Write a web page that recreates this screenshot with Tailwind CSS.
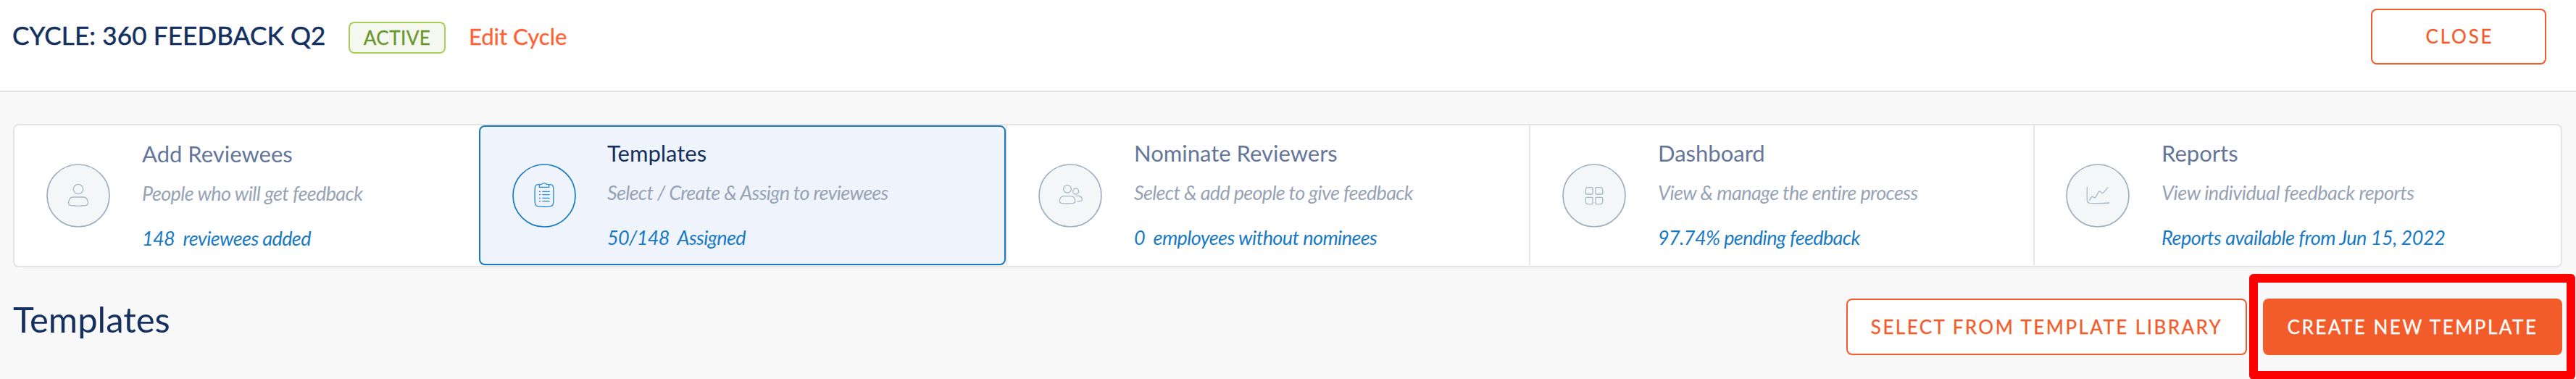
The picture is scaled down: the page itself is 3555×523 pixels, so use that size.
<!DOCTYPE html>
<html lang="en">
<head>
<meta charset="utf-8">
<title>Cycle templates</title>
<script src="https://cdn.jsdelivr.net/npm/@tailwindcss/browser@4"></script>
</head>
<body class="h-[523px] overflow-hidden bg-[#f8f8f8] [font-family:Lato,sans-serif] whitespace-nowrap">
<header class="flex h-[127px] items-start justify-between border-b-2 border-[#e2e2e2] bg-white pl-[17px] pr-[41px] pt-3">
  <div class="flex items-baseline pt-[14px] leading-[44px]">
    <h1 class="w-[464px] text-[35px] tracking-[0.16px] text-[#14305f] [-webkit-text-stroke:0.5px]">CYCLE: 360 FEEDBACK Q2</h1>
    <span class="flex h-11 w-[134px] items-center justify-center rounded-lg border-2 border-[#a9cf58] bg-[#f5f8ee] text-[26px] leading-[40px] tracking-[0.46px] text-[#6a962f] [-webkit-text-stroke:0.3px]">ACTIVE</span>
    <a class="ml-8 text-[31px] text-[#fb6236] [-webkit-text-stroke:0.3px]">Edit Cycle</a>
  </div>
  <button class="h-[77px] w-[242px] rounded-lg border-2 border-[#f25c2b] pl-[3px] text-[26px] tracking-[2.8px] text-[#f25c2b] [-webkit-text-stroke:0.3px]">CLOSE</button>
</header>
<main class="px-[18px] pt-11">
  <nav class="flex h-[198px] w-[3518px] rounded-lg border-2 border-[#e4e4e4] bg-white">
    <section class="flex w-[641px] items-center gap-11 pl-11">
      <svg class="size-[88px] flex-none" viewBox="19 17 264 264" fill="none" stroke="#a9b9c8" stroke-width="4">
        <circle cx="151" cy="149" r="129" fill="#f3f7f8" stroke="#9dafc1" stroke-width="5"/>
        <circle cx="151" cy="122" r="20"/><path d="M130 155H172Q186 155 190 171Q194 186 184 189Q151 194 118 189Q108 186 112 171Q116 155 130 155Z"/>
      </svg>
      <div class="pt-[3px]">
        <h2 class="text-[31px] leading-[54px] text-[#64769a]">Add Reviewees</h2>
        <p class="text-[27px] italic leading-[55px] tracking-[-0.62px] text-[#97a3b5]">People who will get feedback</p>
        <p class="mt-1 text-[27px] italic leading-[61px] tracking-[-0.6px] text-[#1879c3]">148&nbsp; reviewees added</p>
      </div>
    </section>
    <section class="flex h-[193px] w-[727px] items-center gap-[43px] rounded-lg border-2 border-[#1879c3] bg-[#eff4fc] pl-11">
      <svg class="size-[88px] flex-none" viewBox="19 17 264 264" fill="none" stroke="#2a8ad2" stroke-width="4">
        <circle cx="151" cy="149" r="129" stroke="#1879c3" stroke-width="5"/>
        <path d="M131 103Q113 101 113 116Q111 146 113 178Q114 192 126 193Q151 195 176 193Q188 192 189 178Q191 146 189 116Q189 101 171 103M131 103V114H171V103L162 102Q151 93 140 102ZM143 132H174M143 145H174M143 159H174M143 172H174M130 132H136M130 145H136M130 159H136M130 172H136"/>
      </svg>
      <div class="pt-[3px]">
        <h2 class="text-[31px] leading-[54px] text-[#14305f]">Templates</h2>
        <p class="text-[27px] italic leading-[55px] tracking-[-0.67px] text-[#97a3b5]">Select / Create &amp; Assign to reviewees</p>
        <p class="mt-1 text-[27px] italic leading-[61px] tracking-[-0.62px] text-[#1879c3]">50/148&nbsp; Assigned</p>
      </div>
    </section>
    <section class="flex h-[193px] w-[722px] items-center gap-11 border-l-2 border-[#e6e6e6] pl-[43px]">
      <svg class="size-[88px] flex-none" viewBox="19 17 264 264" fill="none" stroke="#a9b9c8" stroke-width="4">
        <circle cx="151" cy="149" r="129" fill="#f3f7f8" stroke="#9dafc1" stroke-width="5"/>
        <circle cx="139" cy="121" r="16"/><circle cx="174" cy="131" r="12"/>
        <path d="M124 151H154Q166 151 170 164Q174 177 164 180Q139 184 114 180Q104 177 108 164Q112 151 124 151ZM173 150H186Q196 150 199 159Q202 169 195 171L180 173"/>
      </svg>
      <div class="pt-[3px]">
        <h2 class="text-[31px] leading-[54px] text-[#64769a]">Nominate Reviewers</h2>
        <p class="text-[27px] italic leading-[55px] tracking-[-0.67px] text-[#97a3b5]">Select &amp; add people to give feedback</p>
        <p class="mt-1 text-[27px] italic leading-[61px] tracking-[-0.58px] text-[#1879c3]">0&nbsp; employees without nominees</p>
      </div>
    </section>
    <section class="flex h-[193px] w-[696px] items-center gap-11 border-l-2 border-[#e6e6e6] pl-11">
      <svg class="size-[88px] flex-none" viewBox="19 17 264 264" fill="none" stroke="#a9b9c8" stroke-width="4">
        <circle cx="151" cy="149" r="129" fill="#f3f7f8" stroke="#9dafc1" stroke-width="5"/>
        <path d="M126 115H142Q145 115 145 118V140Q145 143 142 143H120Q116 143 116 139V125Q116 115 126 115ZM176 115H160Q157 115 157 118V140Q157 143 160 143H182Q186 143 186 139V125Q186 115 176 115ZM126 184H142Q145 184 145 181V159Q145 156 142 156H120Q116 156 116 160V174Q116 184 126 184ZM176 184H160Q157 184 157 181V159Q157 156 160 156H182Q186 156 186 160V174Q186 184 176 184Z"/>
      </svg>
      <div class="pt-[3px]">
        <h2 class="text-[31px] leading-[54px] text-[#64769a]">Dashboard</h2>
        <p class="text-[27px] italic leading-[55px] tracking-[-0.6px] text-[#97a3b5]">View &amp; manage the entire process</p>
        <p class="mt-1 text-[27px] italic leading-[61px] tracking-[-0.6px] text-[#1879c3]">97.74% pending feedback</p>
      </div>
    </section>
    <section class="flex h-[193px] grow items-center gap-11 border-l-2 border-[#e6e6e6] pl-[43px]">
      <svg class="size-[88px] flex-none" viewBox="19 17 264 264" fill="none" stroke="#a9b9c8" stroke-width="4" stroke-linecap="round">
        <circle cx="151" cy="149" r="129" fill="#f3f7f8" stroke="#9dafc1" stroke-width="5"/>
        <path d="M107 115Q106 143 107 168Q107 179 118 180Q158 182 198 179M117 168L124 156Q127 151 131 154L136 157Q141 159 145 151L153 135Q157 129 161 132L168 138Q171 140 175 136L193 115"/>
      </svg>
      <div class="pt-[3px]">
        <h2 class="text-[31px] leading-[54px] text-[#64769a]">Reports</h2>
        <p class="text-[27px] italic leading-[55px] tracking-[-0.47px] text-[#97a3b5]">View individual feedback reports</p>
        <p class="mt-1 text-[27px] italic leading-[61px] tracking-[-0.47px] text-[#1879c3]">Reports available from Jun 15, 2022</p>
      </div>
    </section>
  </nav>
  <div class="flex w-[3518px] items-start pt-[43px]">
    <h2 class="grow text-[49px] leading-[56px] text-[#14305f]">Templates</h2>
    <button class="h-[78px] w-[553px] rounded-lg border-2 border-[#f25c2b] bg-white text-[26px] tracking-[2.45px] text-[#f25c2b] [-webkit-text-stroke:0.3px]">SELECT FROM TEMPLATE LIBRARY</button>
    <button class="ml-[22px] h-[78px] w-[413px] rounded-lg bg-[#f25c2b] text-[26px] tracking-[2.5px] text-white [-webkit-text-stroke:0.3px]">CREATE NEW TEMPLATE</button>
  </div>
</main>
<div class="absolute left-[3104px] top-[378px] h-[146px] w-[450px] rounded-md border-12 border-[#ff0000]"></div>
</body>
</html>
